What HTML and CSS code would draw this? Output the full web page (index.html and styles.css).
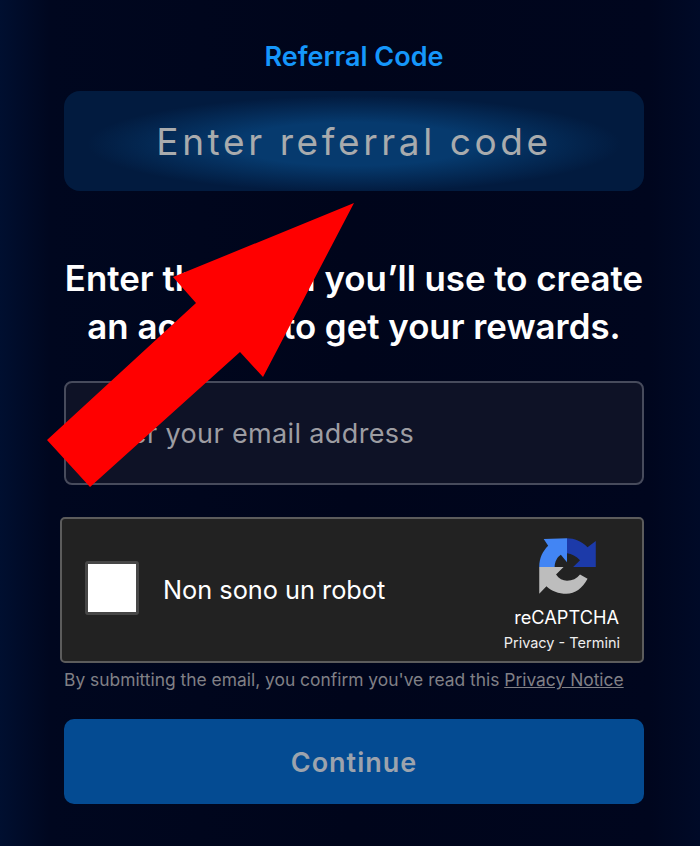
FILE: index.html
```html
<!DOCTYPE html>
<html lang="en">
<head>
<meta charset="utf-8">
<title>Referral Code</title>
<link rel="stylesheet" href="styles.css">
</head>
<body>
<main class="page">
  <h2 class="title">Referral Code</h2>
  <div class="code-box"><span class="code-text">Enter referral code</span></div>
  <h1 class="heading">Enter the email you’ll use to create<br>an account to get your rewards.</h1>
  <div class="email-box"><span class="email-text">Enter your email address</span></div>
  <div class="captcha">
    <div class="check"></div>
    <span class="robot">Non sono un robot</span>
    <div class="badge">
      <svg class="logo" viewBox="0 0 216 216" aria-hidden="true">
        <path fill="#4285f4" d="M27 108 C27 82 37 62 53 46 L40 26 L108 24 L108 94 L90 72 C80 78 72 92 72 108 Z"/>
        <path fill="#1c3aa9" d="M108 24 C130 24 150 32 168 50 L192 32 L192 108 L126 108 L146 88 C135 76 122 70 108 68 Z"/>
        <path fill="#bdbdbd" d="M27 108 L98 108 L76 130 C84 142 96 148 108 148 C124 148 136 142 146 130 L168 142 C152 170 132 186 106 186 C84 186 62 178 48 164 L27 186 Z"/>
      </svg>
      <span class="brand">reCAPTCHA</span>
      <span class="links">Privacy - Termini</span>
    </div>
  </div>
  <p class="note">By submitting the email, you confirm you've read this <a class="note-link" href="#">Privacy Notice</a></p>
  <button class="continue" type="button">Continue</button>
</main>
<svg class="arrow" viewBox="0 0 700 846" aria-hidden="true">
  <polygon fill="#ff0000" points="354,203 173,277 196,303 47,440 90,487 240,352 263,377"/>
</svg>
</body>
</html>
```
FILE: styles.css
```css
* { box-sizing: border-box; }
html, body { margin: 0; height: 100%; }
body {
  position: relative;
  width: 700px;
  height: 846px;
  overflow: hidden;
  font-family: Inter, "Liberation Sans", sans-serif;
  background: linear-gradient(90deg, #000f30 0, #00071f 50px, #00051b 350px, #00061e 650px, #000a27 700px);
}
.page {
  display: flex;
  flex-direction: column;
  align-items: center;
  padding: 39px 56px 0 64px;
}
.title {
  margin: 0;
  height: 35px;
  line-height: 35px;
  font-size: 27px;
  font-weight: 600;
  color: #1597fb;
}
.code-box {
  width: 580px;
  height: 100px;
  margin-top: 17px;
  display: flex;
  align-items: center;
  justify-content: center;
  border-radius: 16px;
  background:
    radial-gradient(ellipse 46% 48% at 50% 53%, #063a6e 0, #063a6e 45%, rgba(6, 58, 110, 0) 100%),
    #021b3f;
}
.code-text {
  font-size: 37px;
  letter-spacing: 3.6px;
  line-height: 44px;
  padding-top: 2px;
  color: #a9abad;
}
.heading {
  margin: 63px 0 0;
  width: 600px;
  text-align: center;
  font-size: 34.85px;
  line-height: 48px;
  font-weight: 600;
  color: #ffffff;
}
.email-box {
  width: 580px;
  height: 104px;
  margin-top: 31px;
  padding-left: 23px;
  display: flex;
  align-items: center;
  background: #0e1226;
  border: 2px solid #474b5c;
  border-radius: 8px;
}
.email-text {
  font-size: 27px;
  letter-spacing: 0.37px;
  color: #9d9da2;
}
.captcha {
  align-self: flex-start;
  margin: 32px 0 0 -4px;
  width: 584px;
  height: 146px;
  padding: 0 22px 0 23px;
  display: flex;
  align-items: center;
  background: #222222;
  border: 2px solid #5c5c5c;
  border-radius: 5px;
}
.check {
  width: 54px;
  height: 54px;
  margin-top: -4px;
  background: #ffffff;
  border: 3px solid #474747;
  border-radius: 3px;
}
.robot {
  margin: -2px 0 0 24px;
  font-size: 25.3px;
  color: #ffffff;
}
.badge {
  margin-left: auto;
  width: 126px;
  display: flex;
  flex-direction: column;
  align-items: flex-end;
}
.logo { width: 74px; height: 74px; margin: 2px 16px 0 0; }
.brand { margin: 1px 1px 0 0; font-size: 18.2px; line-height: 24px; color: #ffffff; }
.links { margin-top: 4px; font-size: 14.5px; line-height: 20px; color: #eeeeee; white-space: pre; }
.note {
  align-self: flex-start;
  margin: 6px 0 0;
  font-size: 17.4px;
  line-height: 22px;
  color: #808086;
}
.note-link { color: #808086; text-decoration: underline; }
.continue {
  width: 580px;
  height: 85px;
  margin-top: 28px;
  padding: 2px 0 0;
  border: 0;
  border-radius: 10px;
  background: #044b92;
  font-family: inherit;
  font-size: 27px;
  font-weight: 600;
  letter-spacing: 1px;
  color: #9ca3ad;
}
.arrow {
  position: absolute;
  left: 0;
  top: 0;
  width: 700px;
  height: 846px;
}
```
